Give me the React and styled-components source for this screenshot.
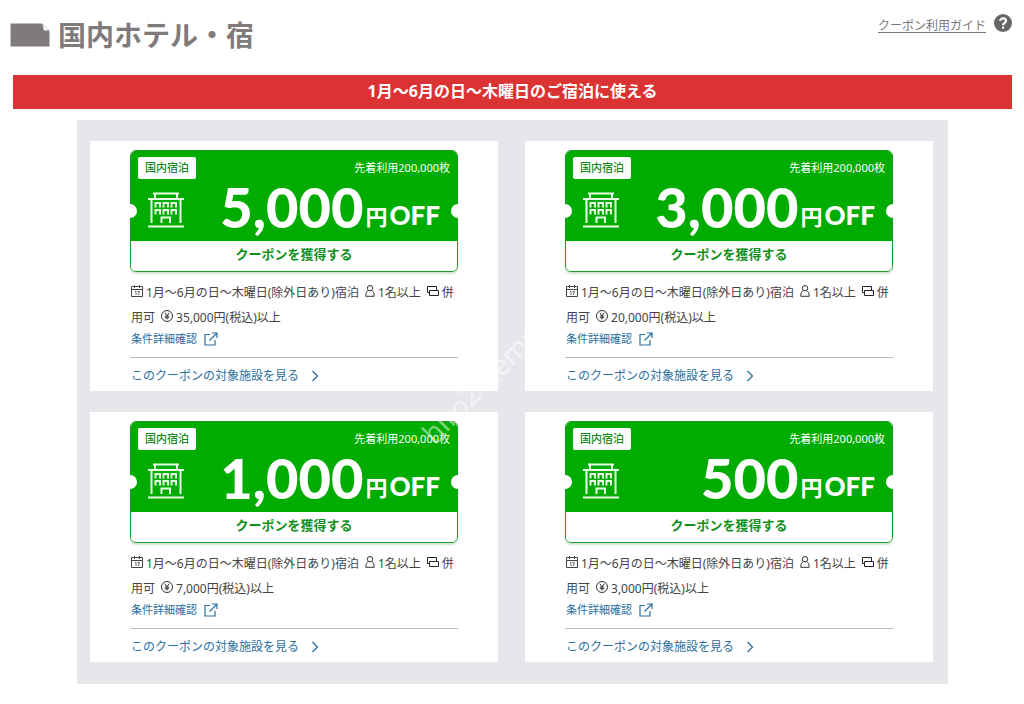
import React from 'react'
import styled, { createGlobalStyle } from 'styled-components'

const GlobalStyle = createGlobalStyle`
  * {
    box-sizing: border-box;
  }

  body {
    margin: 0;
    background: #fff;
    color: #444;
    font-family: "Noto Sans", "Noto Sans CJK JP", sans-serif;
    font-size: 12px;
  }
`

const Page = styled.main`
  position: relative;
  padding: 12px 12px 20px 13px;
`

const Header = styled.header`
  display: flex;
  justify-content: space-between;
  align-items: flex-start;
  height: 63px;
`

const Heading = styled.h1`
  display: flex;
  align-items: center;
  gap: 8px;
  margin: 0 0 0 -3px;
  color: #7f7b7b;
  font-size: 28px;
  line-height: 46px;
  font-weight: 700;
`

const Guide = styled.a`
  display: flex;
  align-items: flex-start;
  gap: 8px;
  padding-top: 2px;
  color: #777;
  line-height: 24px;
  text-decoration: none;

  span {
    text-decoration: underline;
    text-underline-offset: 2px;
  }
`

const Banner = styled.h2`
  margin: 0 0 11px;
  padding-bottom: 2px;
  background: #db3333;
  color: #fff;
  font-size: 16px;
  line-height: 32px;
  font-weight: 700;
  text-align: center;
`

const Panel = styled.section`
  display: grid;
  grid-template-columns: 1fr 1fr;
  gap: 21px 27px;
  margin: 0 64px;
  padding: 21px 15px 22px 13px;
  background: #e7e7eb;
`

const Card = styled.article`
  padding: 9px 40px 3px;
  background: #fff;
`

const Ticket = styled.div`
  position: relative;
  border: 1px solid #1a9a26;
  border-radius: 6px;
  box-shadow: 0 2px 2px #cfe6cf;
`

const TicketTop = styled.div`
  display: grid;
  grid-template-rows: 34px 56px;
  padding: 0 7px;
  border-radius: 5px 5px 0 0;
  background: #00ac00;
  color: #fff;
`

const TicketRow = styled.div`
  display: flex;
  justify-content: space-between;
  align-items: center;
`

const Tag = styled.span`
  padding: 0 7px 2px;
  border-radius: 2px;
  background: #fff;
  color: #168a20;
  font-family: "Noto Sans CJK JP", sans-serif;
  font-size: 11px;
  line-height: 20px;
  font-weight: 500;
`

const Limit = styled.span`
  padding-bottom: 2px;
  font-size: 11px;
`

const Building = styled.span`
  display: flex;
  padding: 0 0 6px 10px;
`

const Amount = styled.p`
  display: flex;
  align-items: flex-end;
  margin: 0 10px 12px 0;
  font-family: Lato, sans-serif;
  font-weight: 900;
  font-size: 56px;
  line-height: 56px;
`

const Unit = styled.span`
  margin-left: 2px;
  font-family: Lato, "Noto Sans CJK JP", sans-serif;
  font-size: 26px;
  line-height: 40px;
`

const Yen = styled.span`
  margin-right: 2px;
  font-size: 22px;
  font-weight: 700;
  line-height: 30px;
`

const Notch = styled.span`
  position: absolute;
  top: 53px;
  ${({ $side }) => $side}: -8px;
  width: 14px;
  height: 14px;
  border-radius: 50%;
  background: #fff;
`

const GetButton = styled.button`
  display: block;
  width: 100%;
  height: 30px;
  padding: 0 0 6px;
  border: 0;
  border-radius: 0 0 5px 5px;
  background: #fff;
  color: #12901c;
  font-family: inherit;
  font-size: 13px;
  font-weight: 700;
  cursor: pointer;
`

const Terms = styled.p`
  margin: 8px 0 0;
  padding-left: 1px;
  line-height: 25px;
  white-space: nowrap;

  svg {
    margin-right: 3px;
    vertical-align: 0;
  }
`

const Term = styled.span`
  margin-right: 6px;
`

const DetailLink = styled.a`
  display: flex;
  align-items: center;
  gap: 7px;
  padding-left: 1px;
  color: #2b6f9e;
  font-size: 11px;
  line-height: 17px;
  text-decoration: none;
`

const TargetLink = styled.a`
  display: flex;
  align-items: center;
  gap: 12px;
  margin-top: 10px;
  padding: 6px 0 0 1px;
  border-top: 1px solid #bbb;
  color: #2b6f9e;
  font-size: 12px;
  line-height: 24px;
  text-decoration: none;
`

const Watermark = styled.span`
  position: absolute;
  top: 368px;
  left: 404px;
  color: rgba(255, 255, 255, 0.5);
  font-size: 28px;
  line-height: 30px;
  transform: rotate(-45deg);
  pointer-events: none;
`

const PageIcon = () => (
  <svg width="40" height="24" viewBox="0 0 40 24" aria-hidden="true">
    <path d="M0.5 0.5H32L39.5 8V23.5H0.5Z" fill="#7f7b7b" />
    <path d="M32.4 1.4L34 7.6H38.8Z" fill="#fff" />
  </svg>
)

const HelpIcon = () => (
  <svg width="18" height="18" viewBox="0 0 18 18" aria-hidden="true">
    <circle cx="9" cy="9" r="9" fill="#666" />
    <path d="M6.2 7C6.2 3.4 12 3.6 12 6.9C12 9 9.1 9 9.1 11.2M9.1 12.6V14.8" fill="none" stroke="#fff" strokeWidth="2.2" />
  </svg>
)

const HotelIcon = () => (
  <svg width="36" height="36" viewBox="0 0 36 36" fill="none" stroke="#e9ffe5" strokeWidth="2" aria-hidden="true">
    <path d="M5 1.5H31M7 1V6M29 1V6M0 7H36M3.5 7V31M32.5 7V31M0 34.5H36" />
    <path d="M7.5 15.5V11H12V15.5M15.5 15.5V11H20V15.5M23.5 15.5V11H28V15.5M7.5 22.5V18H12V22.5M15.5 22.5V18H20V22.5M23.5 22.5V18H28V22.5M13.5 31V25.5H22V31" />
  </svg>
)

const CalendarIcon = () => (
  <svg width="12" height="12" viewBox="0 0 12 12" fill="none" stroke="#444" aria-hidden="true">
    <path d="M.5 1.5H11.5V11.5H.5ZM.5 4.5H11.5M3.5 0V3M8.5 0V3" />
    <path d="M4 6.5H5V10M6.5 6.5H8.5L7.3 10" strokeWidth=".8" />
  </svg>
)

const PersonIcon = () => (
  <svg width="10" height="12" viewBox="0 0 10 12" fill="none" stroke="#333" aria-hidden="true">
    <circle cx="5" cy="3.2" r="2.7" />
    <path d="M3.5 5.5C1.5 6.5.8 8 .8 11.3H9.2C9.2 8 8.5 6.5 6.5 5.5" />
  </svg>
)

const CombineIcon = () => (
  <svg width="12" height="12" viewBox="0 0 12 12" fill="none" stroke="#222" aria-hidden="true">
    <path d="M2.5 7.5H.5V1.5H9.5V5M2.5 5.5H11.5V10.5H2.5Z" />
  </svg>
)

const YenIcon = () => (
  <svg width="12" height="12" viewBox="0 0 12 12" fill="none" stroke="#333" aria-hidden="true">
    <circle cx="6" cy="6" r="5.5" />
    <path d="M3.8 2.8L6 5.6L8.2 2.8M6 5.6V9.5M3.8 6H8.2M3.8 7.7H8.2" />
  </svg>
)

const ExternalIcon = () => (
  <svg width="14" height="14" viewBox="0 0 14 14" fill="none" stroke="#2b6f9e" strokeWidth="1.2" aria-hidden="true">
    <path d="M6 2.5H1V13H11V8M8 1H13V6M13 1L5.5 8.5" />
  </svg>
)

const ChevronIcon = () => (
  <svg width="8" height="12" viewBox="0 0 8 12" fill="none" stroke="#2b6f9e" strokeWidth="1.3" aria-hidden="true">
    <path d="M1.5 1L6.5 6L1.5 11" />
  </svg>
)

const coupons = [
  { amount: '5,000', minimum: '35,000' },
  { amount: '3,000', minimum: '20,000' },
  { amount: '1,000', minimum: '7,000' },
  { amount: '500', minimum: '3,000' },
]

function Coupon({ amount, minimum }) {
  return (
    <Card>
      <Ticket>
        <TicketTop>
          <TicketRow>
            <Tag>国内宿泊</Tag>
            <Limit>先着利用200,000枚</Limit>
          </TicketRow>
          <TicketRow>
            <Building><HotelIcon /></Building>
            <Amount>{amount}<Unit><Yen>円</Yen>OFF</Unit></Amount>
          </TicketRow>
        </TicketTop>
        <GetButton type="button">クーポンを獲得する</GetButton>
        <Notch $side="left" />
        <Notch $side="right" />
      </Ticket>
      <Terms>
        <Term><CalendarIcon />1月～6月の日～木曜日(除外日あり)宿泊</Term>
        <Term><PersonIcon />1名以上</Term>
        <CombineIcon />併<br />
        <Term>用可</Term>
        <YenIcon />{minimum}円(税込)以上
      </Terms>
      <DetailLink href="#">条件詳細確認<ExternalIcon /></DetailLink>
      <TargetLink href="#">このクーポンの対象施設を見る<ChevronIcon /></TargetLink>
    </Card>
  )
}

export default function App() {
  return (
    <Page>
      <GlobalStyle />
      <Header>
        <Heading><PageIcon />国内ホテル・宿</Heading>
        <Guide href="#"><span>クーポン利用ガイド</span><HelpIcon /></Guide>
      </Header>
      <Banner>1月～6月の日～木曜日のご宿泊に使える</Banner>
      <Panel>
        {coupons.map((coupon) => (
          <Coupon key={coupon.amount} {...coupon} />
        ))}
      </Panel>
      <Watermark>hiro24temp</Watermark>
    </Page>
  )
}
